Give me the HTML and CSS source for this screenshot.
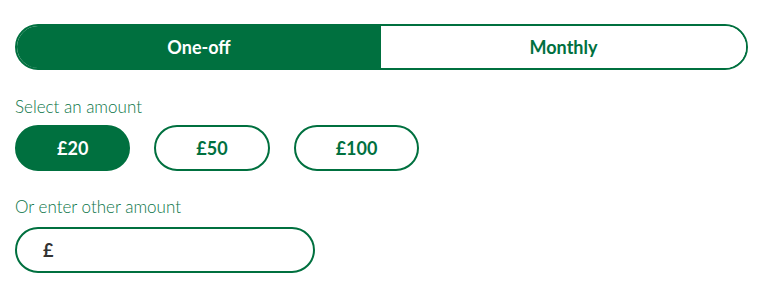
FILE: index.html
```html
<!DOCTYPE html>
<html lang="en">
<head>
<meta charset="utf-8">
<title>Donate</title>
<link rel="stylesheet" href="styles.css">
</head>
<body>
<form class="donate">
  <div class="toggle">
    <button type="button" class="toggle-btn active">One-off</button>
    <button type="button" class="toggle-btn">Monthly</button>
  </div>
  <div class="label">Select an amount</div>
  <div class="amounts">
    <button type="button" class="amount active">£20</button>
    <button type="button" class="amount">£50</button>
    <button type="button" class="amount">£100</button>
  </div>
  <div class="label label-other">Or enter other amount</div>
  <div class="other">
    <span class="currency">£</span>
    <input class="other-input" type="text" aria-label="Other amount">
  </div>
</form>
</body>
</html>
```

FILE: styles.css
```css
* { box-sizing: border-box; }
html, body { margin: 0; padding: 0; background: #fff; }
body { font-family: Lato, "Open Sans", sans-serif; color: #00703f; }
.donate {
  width: 780px;
  padding: 24px 32px 0 15px;
  display: flex;
  flex-direction: column;
}
.toggle {
  display: grid;
  grid-template-columns: 364px 1fr;
  height: 46px;
  border: 2px solid #00703f;
  border-radius: 23px;
  overflow: hidden;
}
.toggle-btn {
  border: 0;
  margin: 0;
  background: #fff;
  color: #00703f;
  font: 700 18px Lato, sans-serif;
  padding: 0;
}
.toggle-btn.active { background: #00703f; color: #fff; }
.label {
  margin-top: 27px;
  font-size: 17px;
  font-weight: 300;
  line-height: 20px;
  color: #0a7447;
}
.amounts {
  display: flex;
  gap: 24px;
  margin-top: 8px;
}
.amount {
  height: 46px;
  border: 2px solid #00703f;
  border-radius: 23px;
  background: #fff;
  color: #00703f;
  font: 700 18px Lato, sans-serif;
  padding: 0 40px;
}
.amount.active { background: #00703f; color: #fff; }
.label-other { margin-top: 26px; }
.other {
  margin-top: 10px;
  width: 300px;
  height: 46px;
  border: 2px solid #00703f;
  border-radius: 23px;
  display: flex;
  align-items: center;
  padding-left: 26px;
}
.currency {
  font: 700 18px Lato, sans-serif;
  color: #333;
}
.other-input {
  border: 0;
  outline: none;
  flex: 1;
  min-width: 0;
  margin-left: 6px;
  font: 400 18px Lato, sans-serif;
  background: transparent;
}
```
